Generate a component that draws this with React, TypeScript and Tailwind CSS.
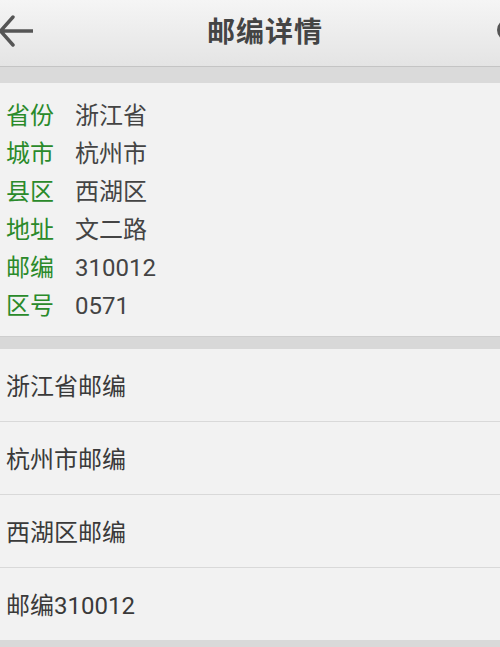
import React from 'react';

const info = [
  { label: '省份', value: '浙江省' },
  { label: '城市', value: '杭州市' },
  { label: '县区', value: '西湖区' },
  { label: '地址', value: '文二路' },
  { label: '邮编', value: '310012' },
  { label: '区号', value: '0571' },
];

const links = ['浙江省邮编', '杭州市邮编', '西湖区邮编', '邮编310012'];

const font = { fontFamily: 'Roboto, "Noto Sans CJK SC", sans-serif' };

const App = () => {
  return (
    <div className="min-h-[647px] w-[500px] overflow-hidden bg-[#d9d9d9]" style={font}>
      {/* Header */}
      <div className="h-[67px] flex items-center justify-between bg-gradient-to-b from-[#f5f5f5] to-[#e4e4e4] border-b border-[#c4c4c4]">
        <svg width="36" height="36" viewBox="0 0 36 36" className="ml-[-3px] mt-[-4px]">
          <path d="M36 18 H4 M16 4 L3.5 18 L16 32" fill="none" stroke="#555" strokeWidth="3.4" strokeLinecap="round" strokeLinejoin="round" />
        </svg>
        <h1 className="text-[28px] font-bold text-[#444] tracking-[1px]">邮编详情</h1>
        <div className="w-[22px] h-[22px] rounded-full border-[3px] border-[#555] mr-[-19px] mt-[-6px]"></div>
      </div>

      {/* Gap */}
      <div className="h-[16px] bg-[#dadada]"></div>

      {/* Info card */}
      <div className="bg-[#f2f2f2] pt-[14px] pb-[11px] border-b border-[#cecece]">
        {info.map((row) => (
          <div key={row.label} className="h-[38px] flex items-center pl-[6px] text-[24px]">
            <span className="w-[69px] text-[#2a8a2a]">{row.label}</span>
            <span className="text-[#444]">{row.value}</span>
          </div>
        ))}
      </div>

      {/* Gap */}
      <div className="h-[12px] bg-[#d8d8d8]"></div>

      {/* Related links */}
      <div className="bg-[#f2f2f2]">
        {links.map((item) => (
          <div key={item} className="h-[73px] flex items-center pl-[6px] pt-[3px] text-[24px] text-[#3a3a3a] border-b border-[#d9d9d9]">
            {item}
          </div>
        ))}
      </div>
    </div>
  );
};

export default App;
